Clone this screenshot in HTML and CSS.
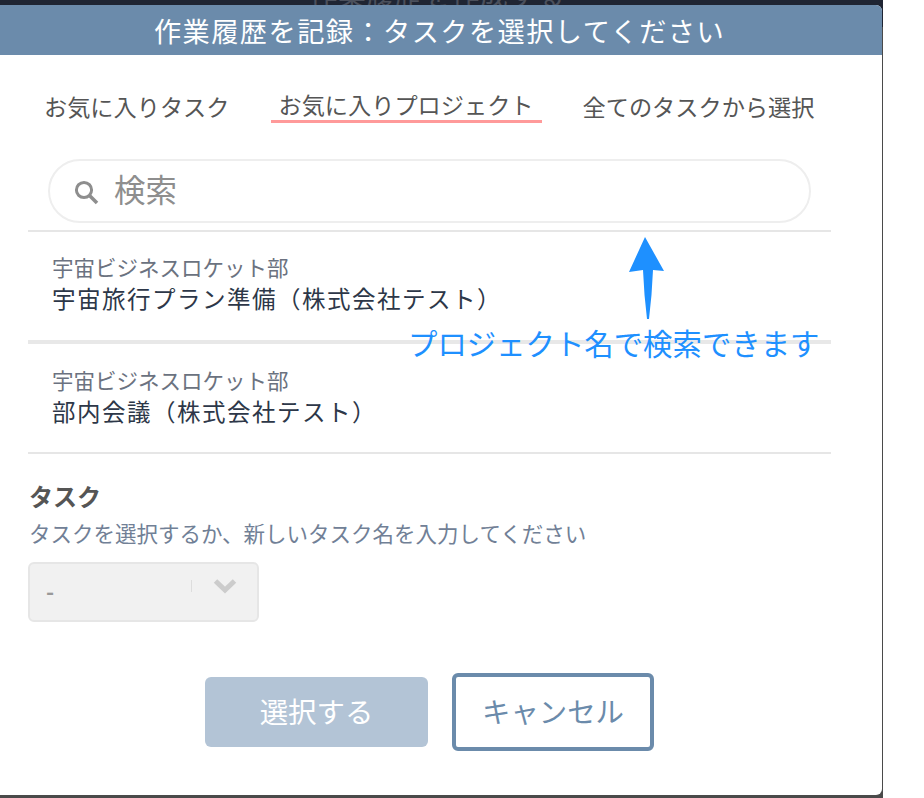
FILE: index.html
```html
<!DOCTYPE html>
<html lang="ja">
<head>
<meta charset="utf-8">
<title>作業履歴を記録</title>
<link rel="stylesheet" href="styles.css">
</head>
<body>
<div class="backdrop">
  <div class="topbar"><div class="ghost">作業履歴を作成する</div></div>
  <div class="modal">
    <div class="modal-head">作業履歴を記録：タスクを選択してください</div>
    <div class="tabs">
      <div class="tab">お気に入りタスク</div>
      <div class="tab tab-active">お気に入りプロジェクト</div>
      <div class="tab">全てのタスクから選択</div>
    </div>
    <div class="search">
      <svg class="search-icon" width="26" height="26" viewBox="0 0 26 26"><circle cx="10" cy="10" r="7.6" fill="none" stroke="#8e8e8e" stroke-width="3"/><path d="M15.5 15.5 L23 23" stroke="#8e8e8e" stroke-width="3.6" fill="none"/></svg>
      <span class="search-text">検索</span>
    </div>
    <div class="list">
      <div class="row">
        <div class="row-sub">宇宙ビジネスロケット部</div>
        <div class="row-title">宇宙旅行プラン準備（株式会社テスト）</div>
      </div>
      <div class="row row-thick">
        <div class="row-sub">宇宙ビジネスロケット部</div>
        <div class="row-title">部内会議（株式会社テスト）</div>
      </div>
    </div>
    <div class="field">
      <div class="field-label">タスク</div>
      <div class="field-help">タスクを選択するか、新しいタスク名を入力してください</div>
      <div class="select">
        <span class="select-value">-</span>
        <span class="select-sep"></span>
        <svg class="chevron" width="24" height="16" viewBox="0 0 24 16"><path d="M2.5 3 L12 12 L21.5 3" fill="none" stroke="#cccccc" stroke-width="5"/></svg>
      </div>
    </div>
    <div class="actions">
      <div class="btn btn-primary">選択する</div>
      <div class="btn btn-outline">キャンセル</div>
    </div>
  </div>
  <svg class="note-arrow" width="40" height="86" viewBox="0 0 40 86"><path d="M17 0 L36 34 L25 33 Q24 58 21 82 L19 82 Q16 58 15 33 L1 35 Z" fill="#1e90ff"/></svg>
  <div class="note-text">プロジェクト名で検索できます</div>
</div>
</body>
</html>
```
FILE: styles.css
```css
* { box-sizing: border-box; }
html, body { margin: 0; padding: 0; background: #fff; }
body { font-family: "Noto Sans CJK JP", "Noto Sans", sans-serif; width: 924px; height: 798px; overflow: hidden; }
.backdrop { position: relative; width: 883px; height: 798px; background: #4a4a4a; overflow: hidden; }
.topbar { height: 27px; background: #1f2533; overflow: hidden; }
.ghost { margin-top: -24px; text-align: center; font-size: 28.4px; line-height: 36px; color: #4b505c; padding-right: 9px; }
.modal { position: absolute; left: 0; top: 5px; width: 882px; height: 790px; background: #fff; border-radius: 0 6px 6px 0; overflow: hidden; }
.modal-head { height: 50px; background: #6b8bab; color: #fff; font-size: 27.2px; letter-spacing: 1.45px; line-height: 50px; text-align: center; font-weight: 400; padding-right: 3px; }
.tabs { display: flex; gap: 41px; padding: 35px 0 0 44px; height: 68px; margin-bottom: 36px; color: #555; font-size: 23.2px; line-height: 32px; }
.tab { white-space: nowrap; font-weight: 400; height: 33px; }
.tab-active { padding: 0 8px; margin-top: -2px; border-bottom: 3px solid #ff9a9a; height: 35px; }
.search { display: flex; align-items: center; width: 763px; height: 64px; margin-left: 48px; border: 2px solid #eeeeee; border-radius: 32px; padding-left: 24px; }
.search-icon { flex: none; margin-top: 4px; }
.search-text { margin-left: 14px; font-size: 31.5px; font-weight: 400; color: #8e8e8e; line-height: 1; margin-top: -5px; }
.list { width: 803px; margin: 7px 0 0 28px; border-top: 2px solid #e6e6e6; }
.row { height: 108px; padding: 20px 0 0 24px; }
.row-thick { height: 114px; border-top: 4px solid #e8e8e8; border-bottom: 2px solid #e6e6e6; padding-top: 21px; }
.row-sub { font-size: 21.5px; line-height: 30px; font-weight: 400; color: #6b7280; white-space: nowrap; }
.row-title { font-size: 23.5px; letter-spacing: 1.5px; line-height: 32px; font-weight: 400; color: #2d3748; white-space: nowrap; }
.field { margin: 24px 0 0 28px; }
.field-label { font-size: 24px; font-weight: 700; color: #555; line-height: 36px; padding-left: 1px; }
.field-help { font-size: 21.5px; font-weight: 400; color: #718096; line-height: 30px; margin-top: 4px; padding-left: 1px; white-space: nowrap; }
.select { position: relative; display: flex; align-items: center; width: 231px; height: 60px; margin-top: 14px; background: #f1f1f1; border: 2px solid #e6e6e6; border-radius: 6px; }
.select-value { margin-left: 16px; font-size: 22px; font-weight: 700; color: #999; line-height: 1; margin-top: -4px; }
.select-sep { position: absolute; left: 161px; top: 16px; width: 1px; height: 12px; background: #ddd; }
.chevron { position: absolute; left: 183px; top: 14px; }
.actions { display: flex; align-items: center; gap: 24px; margin: 51px 0 0 205px; }
.btn { display: flex; align-items: center; justify-content: center; font-size: 28.4px; font-weight: 400; border-radius: 6px; padding-bottom: 3px; }
.btn-primary { width: 223px; height: 70px; background: #b3c4d6; color: #fff; }
.btn-outline { width: 202px; height: 78px; border: 4px solid #6b8bab; color: #6b8bab; background: #fff; }
.note-arrow { position: absolute; left: 628px; top: 237px; }
.note-text { position: absolute; left: 408px; top: 321px; font-size: 29.4px; line-height: 42px; color: #1e90ff; white-space: nowrap; font-weight: 400; }
```
